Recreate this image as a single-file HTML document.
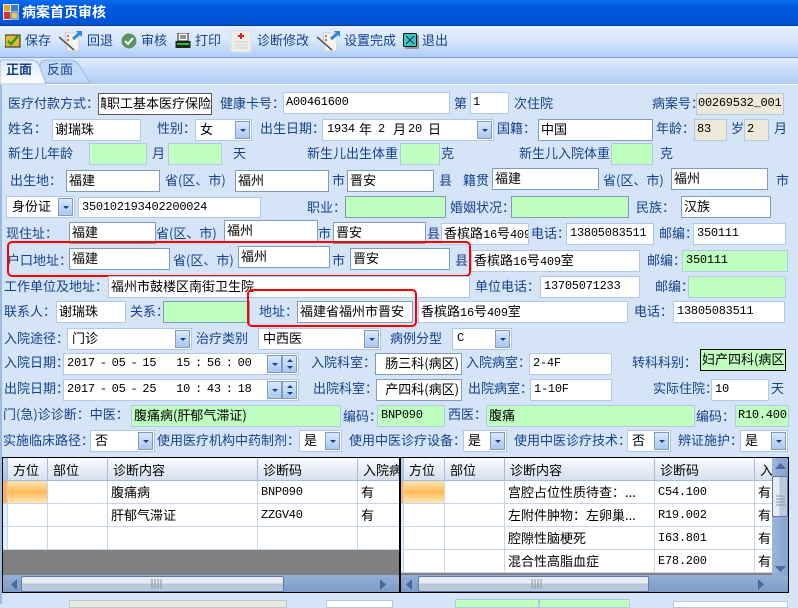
<!DOCTYPE html>
<html lang="zh-CN"><head><meta charset="utf-8"><title>病案首页审核</title>
<style>
*{box-sizing:border-box}
html,body{margin:0;padding:0}
body{width:798px;height:604px;position:relative;overflow:hidden;background:#d5e4f7;font:13px/16px "WenQuanYi Zen Hei","Noto Sans CJK SC","Liberation Sans",sans-serif;color:#000}
.l,.f,.g,.d,.k,.c,.t,.p,.s,.r,.x{position:absolute}
.l{color:#15428b;white-space:nowrap;height:16px}
.t{color:#15428b;white-space:nowrap;top:32px;height:16px}
.f,.g,.d,.k,.c{background:#fff;border:1px solid #b3c8e2;overflow:hidden;white-space:nowrap;padding:1px 2px 0 2px;height:22px}
.d{border-color:#7f9db9}
.g{background:#bfffbf}
.k{background:#ece9d8}
.m{font:12px/18px "Liberation Mono",monospace;letter-spacing:-.25px}
.f.m,.g.m,.k.m,.c.m{padding-top:0}
.a{position:absolute;top:1px}
.b{position:absolute;top:1px;right:1px;width:15px;height:18px;border:1px solid #7f9db9;background:linear-gradient(#d9e8fc,#a9c8f3)}
.b:after{content:"";position:absolute;left:4px;top:7px;border:3px solid transparent;border-top:3px solid #15428b}
.u{position:absolute;top:1px;right:1px;width:15px;height:18px;border:1px solid #7f9db9;background:linear-gradient(#d9e8fc,#a9c8f3)}
.u:before{content:"";position:absolute;left:4px;top:0;border:3px solid transparent;border-bottom:3px solid #15428b}
.u:after{content:"";position:absolute;left:4px;top:10px;border:3px solid transparent;border-top:3px solid #15428b}
.r{border:2px solid #f00;border-radius:5px}
.grid{position:absolute;top:457px;height:136px;border:1px solid #000;background:#808080;overflow:hidden}
.h{position:absolute;top:0;height:23px;background:linear-gradient(#fbfcfe,#d5dfee);border-right:1px solid #a3bcdc;border-bottom:1px solid #a3bcdc;padding:4px 0 0 5px;white-space:nowrap;overflow:hidden}
.e{position:absolute;height:23px;background:#fff;border-right:1px solid #c8d5e8;border-bottom:1px solid #c8d5e8;white-space:nowrap;overflow:hidden;padding:3px 0 0 3px}
.e.m{padding-top:2px}
.o{background:linear-gradient(#ffe6b5,#ffba57 50%,#ffe9b8)}
.hs{position:absolute;background:linear-gradient(#94b0d6,#7b9ac5)}
.th{position:absolute;height:16px;border:1px solid #5f7aa8;border-radius:2px;background:linear-gradient(#e6ebef 45%,#b8c6da 46%,#bccadc)}
</style></head><body>

<div class="x" style="left:0;top:0;width:798px;height:26px;background:linear-gradient(#0a6cf0,#0058dd 30%,#0052d4);border-bottom:1px solid #123a7e"></div>
<svg class="x" style="left:3px;top:4px" width="16" height="16" viewBox="0 0 16 16"><rect x="0" y="0" width="16" height="16" fill="#dfe7f2"/><rect x="1" y="1" width="6" height="6" fill="#e8a21e"/><rect x="8" y="1" width="7" height="6" fill="#3b79c9"/><rect x="1" y="8" width="6" height="7" fill="#d0342c"/><rect x="8" y="8" width="7" height="7" fill="#e9c65e" stroke="#3b79c9"/></svg>
<div class="x" style="left:22px;top:3px;color:#fff;font-size:14px;line-height:18px;font-weight:bold">病案首页审核</div>

<div class="x" style="left:0;top:26px;width:798px;height:32px;background:linear-gradient(#e3eeff,#d9e8fd 45%,#afcdf8);border-bottom:1px solid #7da2d5"></div>
<svg class="x" style="left:5px;top:33px" width="16" height="16" viewBox="0 0 16 16"><rect x="0" y="2" width="15" height="12" fill="#e5b92c" stroke="#222"/><path d="M3 8l3 3 7-8" fill="none" stroke="#2d9a2d" stroke-width="2.5"/></svg>
<div class="t" style="left:25px">保存</div>
<svg class="x" style="left:58px;top:28px" width="26" height="25" viewBox="0 0 26 25"><path d="M7 5h14v18H9z" fill="#f5f5f0" stroke="#ccc"/><path d="M1 9l15 13" stroke="#555" stroke-width="1.5"/><path d="M15 11l7-6" stroke="#2c86de" stroke-width="3"/><path d="M18 3h6v6z" fill="#2c86de"/><path d="M9 8h2M9 12h2" stroke="#c33" stroke-width="1.5"/></svg>
<div class="t" style="left:87px">回退</div>
<svg class="x" style="left:121px;top:33px" width="16" height="16" viewBox="0 0 16 16"><circle cx="8" cy="8" r="7.5" fill="#5d9160"/><path d="M4 8l3 3 5-6" fill="none" stroke="#fff" stroke-width="2"/></svg>
<div class="t" style="left:141px">审核</div>
<svg class="x" style="left:175px;top:33px" width="16" height="16" viewBox="0 0 16 16"><rect x="3" y="0" width="10" height="8" fill="#fff" stroke="#222"/><path d="M5 3h6M5 5h6" stroke="#222"/><rect x="0.500" y="8" width="15" height="7" fill="#222"/><rect x="2" y="10" width="12" height="2" fill="#2bc42b"/></svg>
<div class="t" style="left:195px">打印</div>
<svg class="x" style="left:230px;top:29px" width="22" height="24" viewBox="0 0 22 24"><rect x="1" y="2" width="20" height="21" fill="#efefe8" stroke="#dedede"/><path d="M11 4v6M8 7h6" stroke="#e01c2c" stroke-width="2"/><path d="M4 13h14M4 16h14M4 19h14" stroke="#ccc"/></svg>
<div class="t" style="left:257px">诊断修改</div>
<svg class="x" style="left:316px;top:28px" width="26" height="25" viewBox="0 0 26 25"><path d="M7 5h14v18H9z" fill="#f5f5f0" stroke="#ccc"/><path d="M1 9l15 13" stroke="#555" stroke-width="1.5"/><path d="M15 11l7-6" stroke="#2c86de" stroke-width="3"/><path d="M18 3h6v6z" fill="#2c86de"/><path d="M9 8h2M9 12h2" stroke="#c33" stroke-width="1.5"/></svg>
<div class="t" style="left:344px">设置完成</div>
<svg class="x" style="left:403px;top:33px" width="16" height="16" viewBox="0 0 16 16"><rect x="2" y="2" width="14" height="14" fill="#999"/><rect x="0.500" y="0.500" width="13" height="13" rx="1" fill="#3cc6c6" stroke="#111"/><path d="M3 3l8 8M11 3l-8 8" stroke="#124"/></svg>
<div class="t" style="left:422px">退出</div>

<div class="x" style="left:0;top:58px;width:798px;height:27px;background:linear-gradient(#e0ecfe,#adcbf6);border-bottom:1px solid #8db2e3"></div>
<div class="x" style="left:0;top:84px;width:798px;height:1px;background:#fff"></div>
<svg class="x" style="left:0;top:59px" width="95" height="26" viewBox="0 0 95 26"><defs><linearGradient id="w" x1="0" y1="0" x2="0" y2="1"><stop offset="0" stop-color="#dfeafc"/><stop offset="1" stop-color="#fff"/></linearGradient></defs><path d="M41 24L40 7Q40 1 47 1H70Q76 1 79 6L90 24Z" fill="#c4dafa" stroke="#9cb9df"/><path d="M0 25V4Q0 1 4 1H31Q37 1 39 6L46 25Z" fill="url(#w)" stroke="#9cb9df"/></svg>
<div class="x" style="left:6px;top:61px;color:#15428b;font-weight:bold">正面</div>
<div class="x" style="left:47px;top:61px;color:#15428b">反面</div>
<div class="x" style="left:0;top:85px;width:2px;height:519px;background:#9cb9df"></div>

<div class="l" style="left:8px;top:95px">医疗付款方式：</div>
<div class="d" style="left:98px;top:93px;width:114px;border-color:#555;padding-right:0"><div style="display:flex;justify-content:flex-end;overflow:hidden;width:100%">城镇职工基本医疗保险</div></div>
<div class="l" style="left:220px;top:95px">健康卡号：</div>
<div class="f m" style="left:283px;top:92px;width:167px">A00461600</div>
<div class="l" style="left:454px;top:95px">第</div>
<div class="f m" style="left:470px;top:92px;width:39px">1</div>
<div class="l" style="left:514px;top:95px">次住院</div>
<div class="l" style="left:652px;top:95px">病案号：</div>
<div class="k m" style="left:696px;top:93px;width:88px;padding:0 0 0 1px">00269532_001</div>

<div class="l" style="left:8px;top:120px">姓名：</div>
<div class="f" style="left:52px;top:119px;width:89px">谢瑞珠</div>
<div class="l" style="left:157px;top:120px">性别：</div>
<div class="c" style="left:195px;top:119px;width:57px;padding-left:4px">女<span class="b"></span></div>
<div class="l" style="left:260px;top:120px">出生日期：</div>
<div class="c" style="left:322px;top:119px;width:172px"><span class="a m" style="left:4px;top:0">1934</span><span class="a" style="left:36px">年</span><span class="a m" style="left:55px;top:0">2</span><span class="a" style="left:70px">月</span><span class="a m" style="left:85px;top:0">20</span><span class="a" style="left:105px">日</span><span class="b"></span></div>
<div class="l" style="left:497px;top:120px">国籍：</div>
<div class="d" style="left:538px;top:119px;width:115px">中国</div>
<div class="l" style="left:656px;top:120px">年龄：</div>
<div class="k m" style="left:694px;top:119px;width:33px">83</div>
<div class="l" style="left:731px;top:120px">岁</div>
<div class="k m" style="left:744px;top:119px;width:25px">2</div>
<div class="l" style="left:774px;top:120px">月</div>

<div class="l" style="left:8px;top:145px">新生儿年龄</div>
<div class="g" style="left:89px;top:143px;width:58px"></div>
<div class="l" style="left:152px;top:145px">月</div>
<div class="g" style="left:168px;top:143px;width:54px"></div>
<div class="l" style="left:233px;top:145px">天</div>
<div class="l" style="left:307px;top:145px">新生儿出生体重</div>
<div class="g" style="left:400px;top:143px;width:40px"></div>
<div class="l" style="left:441px;top:145px">克</div>
<div class="l" style="left:519px;top:145px">新生儿入院体重</div>
<div class="g" style="left:611px;top:143px;width:42px"></div>
<div class="l" style="left:660px;top:145px">克</div>

<div class="l" style="left:10px;top:172px">出生地：</div>
<div class="d" style="left:66px;top:170px;width:94px">福建</div>
<div class="l" style="left:165px;top:172px">省(区、市)</div>
<div class="d" style="left:235px;top:170px;width:94px">福州</div>
<div class="l" style="left:332px;top:172px">市</div>
<div class="d" style="left:347px;top:170px;width:87px">晋安</div>
<div class="l" style="left:439px;top:172px">县</div>
<div class="l" style="left:463px;top:172px">籍贯</div>
<div class="d" style="left:492px;top:168px;width:107px">福建</div>
<div class="l" style="left:603px;top:172px">省(区、市)</div>
<div class="d" style="left:671px;top:168px;width:97px">福州</div>
<div class="l" style="left:776px;top:172px">市</div>

<div class="c" style="left:6px;top:196px;width:69px;padding-left:5px">身份证<span class="b"></span></div>
<div class="f m" style="left:78px;top:197px;width:183px;height:21px;padding-left:3px">350102193402200024</div>
<div class="l" style="left:307px;top:199px">职业：</div>
<div class="g" style="left:345px;top:196px;width:101px;border-color:#7f9db9"></div>
<div class="l" style="left:450px;top:199px">婚姻状况：</div>
<div class="g" style="left:511px;top:196px;width:118px;border-color:#7f9db9"></div>
<div class="l" style="left:636px;top:199px">民族：</div>
<div class="d" style="left:681px;top:196px;width:90px">汉族</div>

<div class="l" style="left:6px;top:225px">现住址：</div>
<div class="d" style="left:69px;top:222px;width:87px">福建</div>
<div class="l" style="left:156px;top:225px">省(区、市)</div>
<div class="d" style="left:224px;top:220px;width:94px">福州</div>
<div class="l" style="left:318px;top:225px">市</div>
<div class="d" style="left:333px;top:222px;width:93px">晋安</div>
<div class="l" style="left:427px;top:225px">县</div>
<div class="f" style="left:441px;top:223px;width:88px">香槟路<span class="m">16</span>号<span class="m">409</span>室</div>
<div class="l" style="left:531px;top:225px">电话：</div>
<div class="f m" style="left:566px;top:223px;width:88px;padding-left:3px">13805083511</div>
<div class="l" style="left:659px;top:225px">邮编：</div>
<div class="f m" style="left:693px;top:223px;width:93px;padding-left:3px">350111</div>

<div class="l" style="left:7px;top:252px">户口地址：</div>
<div class="d" style="left:69px;top:248px;width:101px">福建</div>
<div class="l" style="left:173px;top:252px">省(区、市)</div>
<div class="d" style="left:238px;top:246px;width:92px">福州</div>
<div class="l" style="left:332px;top:252px">市</div>
<div class="d" style="left:350px;top:248px;width:100px">晋安</div>
<div class="l" style="left:455px;top:252px">县</div>
<div class="f" style="left:471px;top:250px;width:169px">香槟路<span class="m">16</span>号<span class="m">409</span>室</div>
<div class="l" style="left:647px;top:252px">邮编：</div>
<div class="g m" style="left:682px;top:250px;width:106px;padding-left:3px">350111</div>
<div class="r" style="left:7px;top:241px;width:464px;height:36px"></div>

<div class="l" style="left:4px;top:278px">工作单位及地址：</div>
<div class="f" style="left:108px;top:276px;width:362px">福州市鼓楼区南街卫生院</div>
<div class="l" style="left:475px;top:278px">单位电话：</div>
<div class="f m" style="left:540px;top:276px;width:100px;padding-left:3px">13705071233</div>
<div class="l" style="left:655px;top:278px">邮编：</div>
<div class="g" style="left:688px;top:276px;width:98px"></div>

<div class="l" style="left:4px;top:303px">联系人：</div>
<div class="f" style="left:56px;top:301px;width:70px">谢瑞珠</div>
<div class="l" style="left:130px;top:303px">关系：</div>
<div class="g" style="left:163px;top:301px;width:87px;border-color:#7f9db9"></div>
<div class="l" style="left:259px;top:303px">地址：</div>
<div class="f" style="left:297px;top:301px;width:116px;border-color:#7f9db9">福建省福州市晋安</div>
<div class="f" style="left:418px;top:301px;width:210px">香槟路<span class="m">16</span>号<span class="m">409</span>室</div>
<div class="l" style="left:634px;top:303px">电话：</div>
<div class="f m" style="left:673px;top:301px;width:112px;padding-left:3px">13805083511</div>
<div class="r" style="left:247px;top:289px;width:170px;height:38px"></div>

<div class="l" style="left:4px;top:330px">入院途径：</div>
<div class="c" style="left:67px;top:328px;width:125px;padding-left:4px">门诊<span class="b"></span></div>
<div class="l" style="left:196px;top:330px">治疗类别</div>
<div class="c" style="left:258px;top:328px;width:123px;padding-left:4px">中西医<span class="b"></span></div>
<div class="l" style="left:390px;top:330px">病例分型</div>
<div class="c m" style="left:452px;top:328px;width:60px;padding-left:4px">C<span class="b"></span></div>

<div class="l" style="left:4px;top:354px">入院日期：</div>
<div class="c m" style="left:63px;top:353px;width:236px;padding-left:3px;word-spacing:-2px">2017 - 05 - 15&nbsp;&nbsp;&nbsp;&nbsp;15 : 56 : 00<span class="b" style="right:16px"></span><span class="u"></span></div>
<div class="l" style="left:311px;top:354px">入院科室：</div>
<div class="d" style="left:375px;top:353px;width:87px;display:flex;justify-content:flex-end">肠三科(病区)</div>
<div class="l" style="left:466px;top:354px">入院病室：</div>
<div class="f m" style="left:529px;top:353px;width:83px;padding-left:3px">2-4F</div>
<div class="l" style="left:632px;top:354px">转科科别：</div>
<div class="g" style="left:700px;top:349px;width:86px;border-color:#000;padding-left:1px">妇产四科(病区</div>

<div class="l" style="left:4px;top:380px">出院日期：</div>
<div class="c m" style="left:63px;top:379px;width:236px;padding-left:3px;word-spacing:-2px">2017 - 05 - 25&nbsp;&nbsp;&nbsp;&nbsp;10 : 43 : 18<span class="b" style="right:16px"></span><span class="u"></span></div>
<div class="l" style="left:313px;top:380px">出院科室：</div>
<div class="d" style="left:376px;top:379px;width:86px;display:flex;justify-content:flex-end">产四科(病区)</div>
<div class="l" style="left:468px;top:380px">出院病室：</div>
<div class="f m" style="left:530px;top:379px;width:82px;padding-left:3px">1-10F</div>
<div class="l" style="left:653px;top:380px">实际住院：</div>
<div class="f m" style="left:711px;top:379px;width:58px;padding-left:3px">10</div>
<div class="l" style="left:771px;top:380px">天</div>

<div class="l" style="left:3px;top:406px">门(急)诊诊断：中医：</div>
<div class="g" style="left:131px;top:405px;width:210px;padding-left:2px">腹痛病(肝郁气滞证)</div>
<div class="l" style="left:343px;top:408px">编码：</div>
<div class="g m" style="left:377px;top:405px;width:68px;padding-left:3px">BNP090</div>
<div class="l" style="left:448px;top:406px">西医：</div>
<div class="g" style="left:486px;top:405px;width:209px">腹痛</div>
<div class="l" style="left:696px;top:408px">编码：</div>
<div class="g m" style="left:735px;top:405px;width:54px;padding-left:2px">R10.400</div>

<div class="l" style="left:3px;top:432px">实施临床路径：</div>
<div class="c" style="left:90px;top:430px;width:65px;padding-left:4px">否<span class="b"></span></div>
<div class="l" style="left:157px;top:432px">使用医疗机构中药制剂：</div>
<div class="c" style="left:299px;top:430px;width:43px;padding-left:4px">是<span class="b"></span></div>
<div class="l" style="left:349px;top:432px">使用中医诊疗设备：</div>
<div class="c" style="left:463px;top:430px;width:44px;padding-left:4px">是<span class="b"></span></div>
<div class="l" style="left:514px;top:432px">使用中医诊疗技术：</div>
<div class="c" style="left:627px;top:430px;width:44px;padding-left:4px">否<span class="b"></span></div>
<div class="l" style="left:678px;top:432px">辨证施护：</div>
<div class="c" style="left:740px;top:430px;width:48px;padding-left:4px">是<span class="b"></span></div>

<div class="grid" style="left:2px;width:398px">
<div class="h" style="left:0;width:5px;padding:0;background:linear-gradient(#c3d7f3,#a9c5ea)"></div>
<div class="h" style="left:5px;width:40px;padding-left:5px">方位</div>
<div class="h" style="left:45px;width:60px">部位</div>
<div class="h" style="left:105px;width:150px">诊断内容</div>
<div class="h" style="left:255px;width:100px">诊断码</div>
<div class="h" style="left:355px;width:45px">入院病情</div>
<div class="e" style="left:0;top:23px;width:5px;padding:0;height:23px;background:#ffb24f"></div>
<div class="e o" style="left:5px;top:23px;width:40px"></div>
<div class="e" style="left:45px;top:23px;width:60px"></div>
<div class="e" style="left:105px;top:23px;width:150px">腹痛病</div>
<div class="e m" style="left:255px;top:23px;width:100px">BNP090</div>
<div class="e" style="left:355px;top:23px;width:45px">有</div>
<div class="e" style="left:0;top:46px;width:5px;padding:0;background:#e3edfb"></div>
<div class="e" style="left:5px;top:46px;width:40px"></div>
<div class="e" style="left:45px;top:46px;width:60px"></div>
<div class="e" style="left:105px;top:46px;width:150px">肝郁气滞证</div>
<div class="e m" style="left:255px;top:46px;width:100px">ZZGV40</div>
<div class="e" style="left:355px;top:46px;width:45px">有</div>
<div class="e" style="left:0;top:69px;width:5px;padding:0;background:#e3edfb"></div>
<div class="e" style="left:5px;top:69px;width:40px"></div>
<div class="e" style="left:45px;top:69px;width:60px"></div>
<div class="e" style="left:105px;top:69px;width:150px"></div>
<div class="e" style="left:255px;top:69px;width:100px"></div>
<div class="e" style="left:355px;top:69px;width:45px"></div>
<div class="hs" style="left:0;top:117px;width:398px;height:18px"></div>
<div class="th" style="left:18px;top:118px;width:263px"></div>
<svg class="x" style="left:8px;top:121px" width="375" height="11" viewBox="0 0 375 11"><path d="M6 0L0 5.500 6 11Z" fill="#4a6a9c"/><path d="M369 0L375 5.500 369 11Z" fill="#4a6a9c"/><path d="M141 0v10M144 0v10M147 0v10M150 0v10" stroke="#8896ad"/></svg>
</div>

<div class="grid" style="left:400px;width:389px">
<div class="h" style="left:0;width:3px;padding:0;background:linear-gradient(#c3d7f3,#a9c5ea)"></div>
<div class="h" style="left:3px;width:41px;padding-left:5px">方位</div>
<div class="h" style="left:44px;width:60px">部位</div>
<div class="h" style="left:104px;width:150px">诊断内容</div>
<div class="h" style="left:254px;width:100px">诊断码</div>
<div class="h" style="left:354px;width:30px">入院病情</div>
<div class="e" style="left:0;top:23px;width:3px;padding:0;background:#ffb24f"></div>
<div class="e o" style="left:3px;top:23px;width:41px"></div>
<div class="e" style="left:44px;top:23px;width:60px"></div>
<div class="e" style="left:104px;top:23px;width:150px">宫腔占位性质待查：...</div>
<div class="e m" style="left:254px;top:23px;width:100px">C54.100</div>
<div class="e" style="left:354px;top:23px;width:30px">有</div>
<div class="e" style="left:0;top:46px;width:3px;padding:0;background:#e3edfb"></div>
<div class="e" style="left:3px;top:46px;width:41px"></div>
<div class="e" style="left:44px;top:46px;width:60px"></div>
<div class="e" style="left:104px;top:46px;width:150px">左附件肿物：左卵巢...</div>
<div class="e m" style="left:254px;top:46px;width:100px">R19.002</div>
<div class="e" style="left:354px;top:46px;width:30px">有</div>
<div class="e" style="left:0;top:69px;width:3px;padding:0;background:#e3edfb"></div>
<div class="e" style="left:3px;top:69px;width:41px"></div>
<div class="e" style="left:44px;top:69px;width:60px"></div>
<div class="e" style="left:104px;top:69px;width:150px">腔隙性脑梗死</div>
<div class="e m" style="left:254px;top:69px;width:100px">I63.801</div>
<div class="e" style="left:354px;top:69px;width:30px">有</div>
<div class="e" style="left:0;top:92px;width:3px;padding:0;background:#e3edfb"></div>
<div class="e" style="left:3px;top:92px;width:41px"></div>
<div class="e" style="left:44px;top:92px;width:60px"></div>
<div class="e" style="left:104px;top:92px;width:150px">混合性高脂血症</div>
<div class="e m" style="left:254px;top:92px;width:100px">E78.200</div>
<div class="e" style="left:354px;top:92px;width:30px">有</div>
<div class="hs" style="left:0;top:117px;width:387px;height:18px"></div>
<div class="hs" style="left:371px;top:0;width:17px;height:117px;background:linear-gradient(90deg,#9bb6da,#82a1cc)"></div>
<div class="th" style="left:17px;top:118px;width:231px"></div>
<div class="th" style="left:371px;top:18px;width:16px;height:41px;background:linear-gradient(90deg,#e6ebef 45%,#b8c6da 46%,#bccadc)"></div>
<svg class="x" style="left:5px;top:121px" width="358" height="11" viewBox="0 0 358 11"><path d="M6 0L0 5.500 6 11Z" fill="#4a6a9c"/><path d="M352 0L358 5.500 352 11Z" fill="#4a6a9c"/><path d="M126 0v10M129 0v10M132 0v10M135 0v10" stroke="#8896ad"/></svg>
<svg class="x" style="left:374px;top:5px" width="11" height="110" viewBox="0 0 11 110"><path d="M0 6L5.500 0 11 6Z" fill="#4a6a9c"/><path d="M0 103L5.500 109 11 103Z" fill="#4a6a9c"/><path d="M1 33h9M1 36h9M1 39h9M1 42h9" stroke="#8896ad"/></svg>
</div>

<div class="k" style="left:69px;top:600px;width:218px;height:8px;padding:0"></div>
<div class="f" style="left:326px;top:600px;width:67px;height:8px;padding:0"></div>
<div class="g" style="left:455px;top:599px;width:84px;height:9px;padding:0"></div>
<div class="g" style="left:539px;top:599px;width:91px;height:9px;padding:0"></div>
<div class="f" style="left:673px;top:601px;width:115px;height:7px;padding:0"></div>
</body></html>
